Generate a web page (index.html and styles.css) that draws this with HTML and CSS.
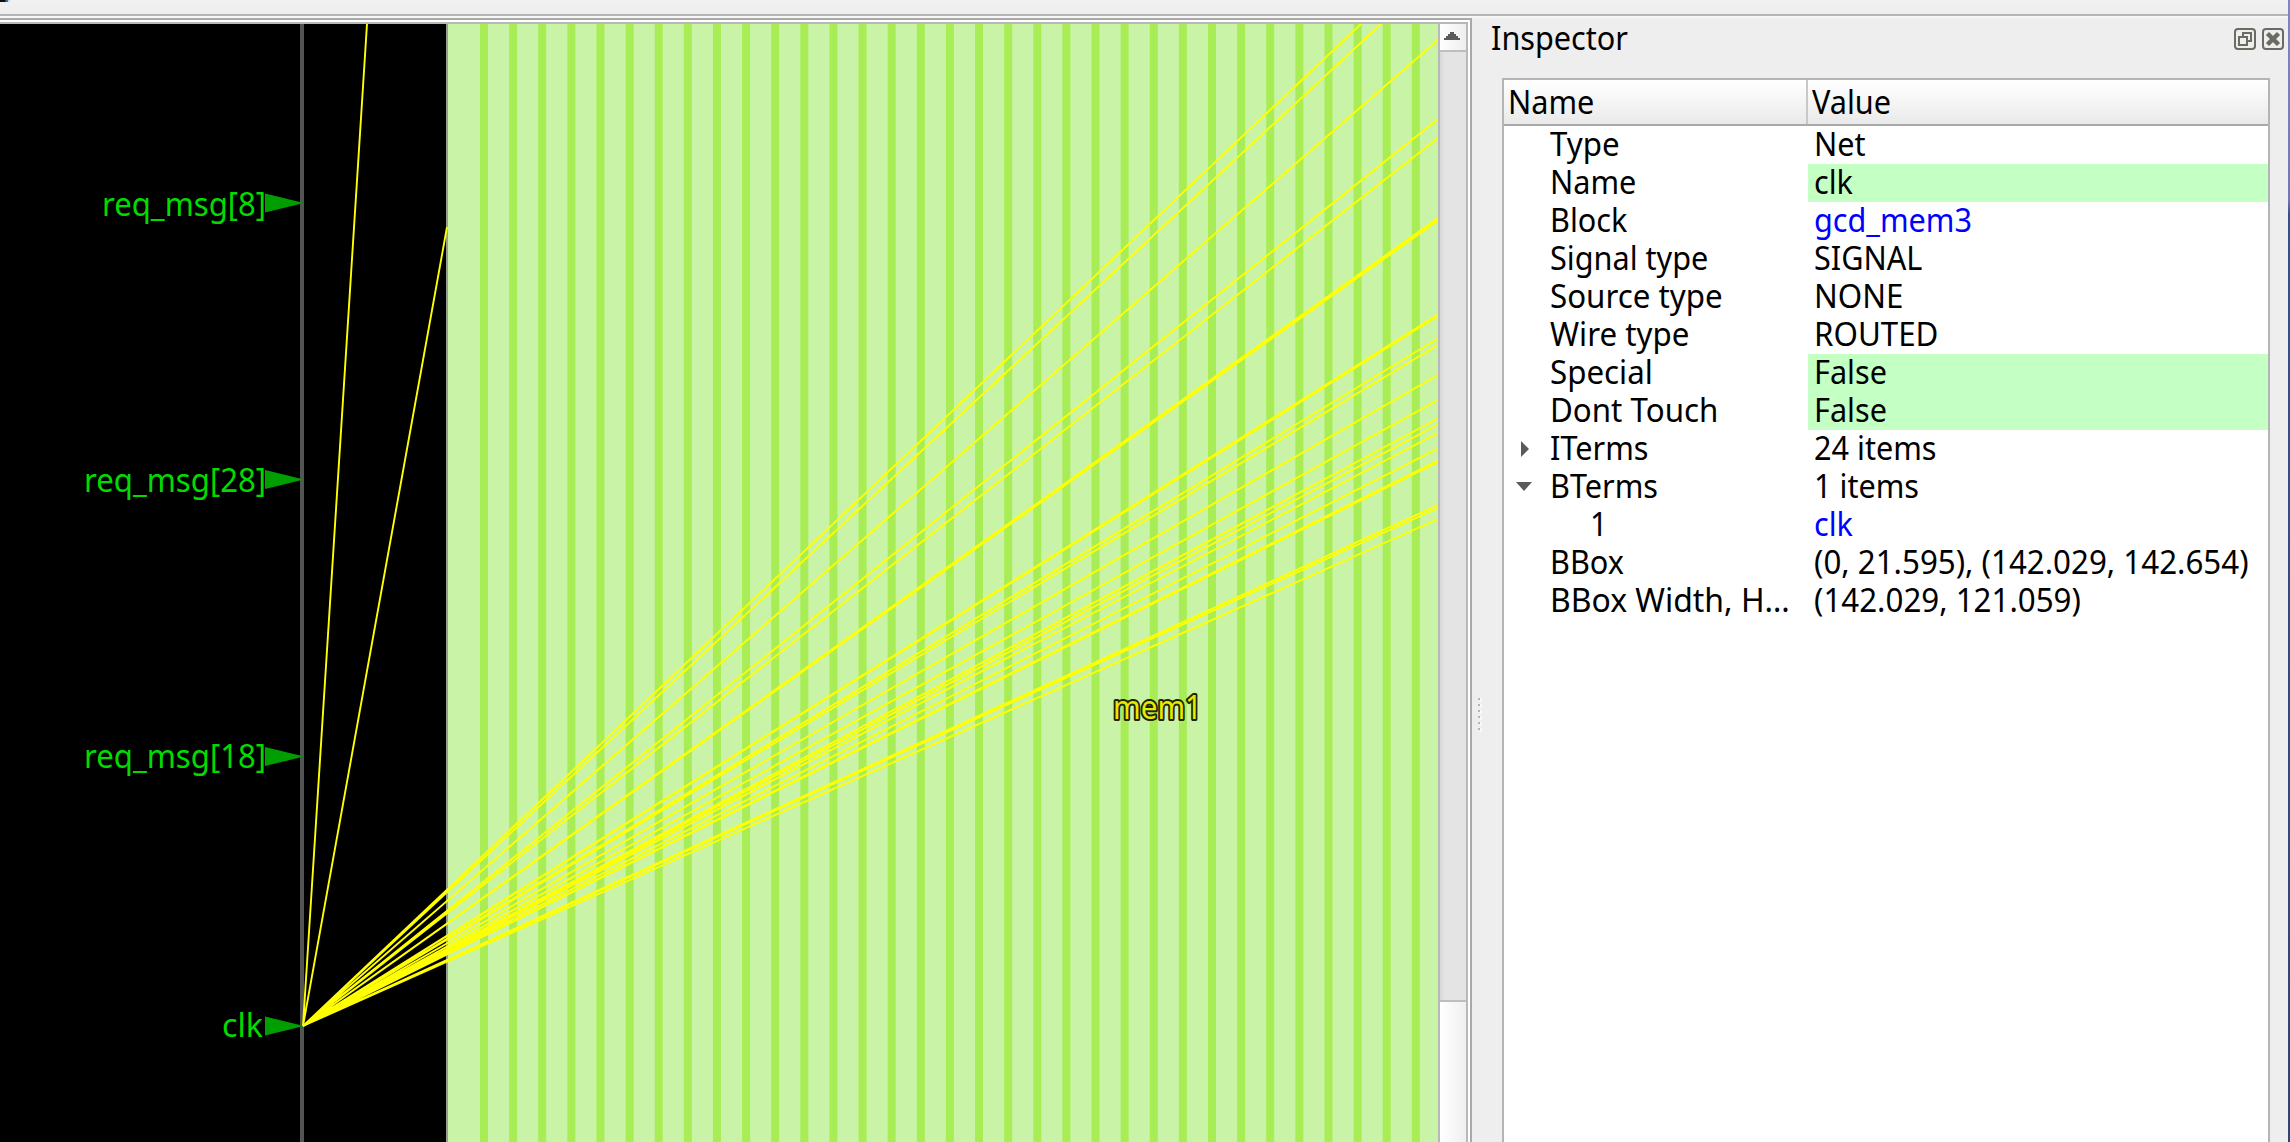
FILE: index.html
```html
<!DOCTYPE html>
<html lang="en">
<head>
<meta charset="utf-8">
<title>Layout viewer</title>
<link rel="stylesheet" href="styles.css">
</head>
<body>
<div class="window">
  <div class="toolbar"><span class="toolbar-mark"></span></div>
  <main class="workspace">
    <section class="viewer">
      <svg class="layout" width="1438" height="1118" viewBox="0 24 1438 1118">
        <rect x="0" y="24" width="1438" height="1118" fill="#000"/>
        <rect x="446" y="24" width="992" height="1118" fill="#c9f4a7"/>
        <path d="M480 583H1438" stroke="#a8ed55" stroke-width="1118" stroke-dasharray="8 21.12" stroke-dashoffset="0"/>
        <rect x="446" y="24" width="2" height="1118" fill="#96a08c"/>
        <rect x="300" y="24" width="4" height="1118" fill="#545454"/>
        <g class="pin-mark">
          <path d="M265 193.500L304 203L265 212.500Z"/>
          <path d="M265 470L304 479.500L265 489Z"/>
          <path d="M265 747L304 756.500L265 766Z"/>
          <path d="M265 1016.500L304 1026L265 1035.500Z"/>
        </g>
        <g class="pin-name">
          <text x="102" y="216" textLength="164" lengthAdjust="spacingAndGlyphs">req_msg[8]</text>
          <text x="84" y="492" textLength="182" lengthAdjust="spacingAndGlyphs">req_msg[28]</text>
          <text x="84" y="768" textLength="182" lengthAdjust="spacingAndGlyphs">req_msg[18]</text>
          <text x="222" y="1037" textLength="41" lengthAdjust="spacingAndGlyphs">clk</text>
        </g>
        <g class="flylines">
          <path d="M303 1026L367 24M303 1026L447 227"/>
          <path d="M303 1026L1361 24M303 1026L1381 24M303 1026L1438 40M303 1026L1438 119M303 1026L1438 138"/>
          <path d="M303 1026L1438 218M303 1026L1438 220.500M303 1026L1438 314.500M303 1026L1438 316M303 1026L1438 338.500M303 1026L1438 345"/>
          <path d="M303 1026L1438 375M303 1026L1438 400M303 1026L1438 418.500M303 1026L1438 424.500M303 1026L1438 433M303 1026L1438 448.500"/>
          <path d="M303 1026L1438 460.500M303 1026L1438 462M303 1026L1438 505M303 1026L1438 508M303 1026L1438 519"/>
        </g>
        <text class="macro-name" x="1113" y="719" textLength="89" lengthAdjust="spacingAndGlyphs">mem1</text>
      </svg>
      <div class="scrollbar">
        <div class="scroll-up"><svg width="16" height="8" viewBox="0 0 16 8"><path d="M6 0H10V2H12V4H14V6H16V8H0V6H2V4H4V2H6Z" fill="#5a5a5a"/></svg></div>
        <div class="scroll-track"></div>
        <div class="scroll-thumb"></div>
      </div>
    </section>
    <div class="splitter"><i></i><i></i><i></i><i></i><i></i><i></i></div>
    <aside class="inspector">
      <header class="dock-title">
        <span class="txt">Inspector</span>
        <svg class="dock-buttons" width="50" height="22" viewBox="0 0 50 22" fill="none" stroke="#6b6b63" stroke-width="2">
          <rect x="1" y="1" width="20" height="20" rx="3"/>
          <path d="M9 9V5H17V13H13M5 9H13V17H5Z"/>
          <rect x="29" y="1" width="20" height="20" rx="3"/>
          <path d="M33.500 5.500L44.500 16.500M44.500 5.500L33.500 16.500" stroke-width="4.500"/>
        </svg>
      </header>
      <div class="tree">
        <div class="row head"><div class="cell"><span class="txt">Name</span></div><div class="cell"><span class="txt">Value</span></div></div>
        <div class="row"><div class="cell"><span class="txt wide">Type</span></div><div class="cell"><span class="txt">Net</span></div></div>
        <div class="row"><div class="cell"><span class="txt">Name</span></div><div class="cell edit"><span class="txt">clk</span></div></div>
        <div class="row"><div class="cell"><span class="txt">Block</span></div><div class="cell link"><span class="txt">gcd_mem3</span></div></div>
        <div class="row"><div class="cell"><span class="txt">Signal type</span></div><div class="cell"><span class="txt">SIGNAL</span></div></div>
        <div class="row"><div class="cell"><span class="txt wide">Source type</span></div><div class="cell"><span class="txt wide">NONE</span></div></div>
        <div class="row"><div class="cell"><span class="txt wide">Wire type</span></div><div class="cell"><span class="txt wide">ROUTED</span></div></div>
        <div class="row"><div class="cell"><span class="txt wide">Special</span></div><div class="cell edit"><span class="txt">False</span></div></div>
        <div class="row"><div class="cell"><span class="txt wide">Dont Touch</span></div><div class="cell edit"><span class="txt">False</span></div></div>
        <div class="row"><div class="cell branch"><svg width="46" height="38" viewBox="0 0 46 38"><path d="M17 11L25 19L17 27Z" fill="#5a5a5a"/></svg><span class="txt">ITerms</span></div><div class="cell"><span class="txt">24 items</span></div></div>
        <div class="row"><div class="cell branch"><svg width="46" height="38" viewBox="0 0 46 38"><path d="M12 14H28L20 23Z" fill="#5a5a5a"/></svg><span class="txt">BTerms</span></div><div class="cell"><span class="txt">1 items</span></div></div>
        <div class="row"><div class="cell child"><span class="txt">1</span></div><div class="cell link"><span class="txt">clk</span></div></div>
        <div class="row"><div class="cell"><span class="txt">BBox</span></div><div class="cell"><span class="txt wide">(0, 21.595), (142.029, 142.654)</span></div></div>
        <div class="row"><div class="cell"><span class="txt full">BBox Width, H…</span></div><div class="cell"><span class="txt wide">(142.029, 121.059)</span></div></div>
      </div>
    </aside>
  </main>
</div>
</body>
</html>
```
FILE: styles.css
```css
* { box-sizing: border-box; }
body { margin: 0; font-family: "Noto Sans", sans-serif; font-size: 32px; color: #000; background: #eee; }
.window { width: 2290px; height: 1142px; overflow: hidden; display: flex; flex-direction: column; background: #eee; border-right: 2px solid; border-image: linear-gradient(#8084c0, #7378b4 200px, #34508a 215px, #33436f) 1; border-image-width: 0 2px 0 0; }
.toolbar { height: 18px; flex: none; background: linear-gradient(#f1f1f1, #eee); border-bottom: 2px solid #f7f7f7; box-shadow: inset 0 -2px #b4b4b4; }
.toolbar-mark { display: block; width: 10px; height: 2px; background: linear-gradient(90deg, #081018 5px, #3d70a8 6px 8px, #b8dcf0 8px); }
.workspace { flex: 1; min-height: 0; display: flex; }
.viewer { width: 1472px; display: flex; border-top: 2px solid #a9a9a9; border-right: 2px solid #a9a9a9; padding: 2px 2px 0 0; background: #fff; }
.layout { display: block; flex: none; width: 1438px; height: 1120px; border-top: 2px solid #b8b8b8; }
.pin-mark { fill: #009e00; }
.pin-name { fill: #00dc00; }
.flylines { fill: none; stroke: #ff0; stroke-width: 1.9; }
.macro-name { fill: #e8e800; stroke: #1c2400; stroke-width: 4px; paint-order: stroke; stroke-linejoin: round; }
.scrollbar { width: 30px; display: flex; flex-direction: column; border: solid #b8b8b8; border-width: 2px 2px 0; }
.scroll-up { height: 28px; display: flex; align-items: center; justify-content: center; padding-right: 2px; padding-bottom: 2px; background: linear-gradient(90deg, #fefefe, #eee); border-bottom: 2px solid #bebebe; }
.scroll-track { height: 948px; background: linear-gradient(90deg, #d8d8d8, #e4e4e4 5px); }
.scroll-thumb { flex: 1; border-top: 2px solid #bebebe; background: linear-gradient(90deg, #fff, #efefef); }
.splitter { width: 18px; padding: 680px 0 0 6px; display: flex; flex-direction: column; gap: 4px; }
.splitter i { width: 2px; height: 2px; flex: none; background: #b5b5b5; box-shadow: 2px 0 #f8f8f8, 2px 2px #f8f8f8; }
.inspector { flex: 1; display: flex; flex-direction: column; }
.dock-title { height: 60px; flex: none; display: flex; justify-content: space-between; align-items: flex-start; padding: 2px 4px 0 1px; }
.dock-buttons { margin-top: 8px; }
.tree { flex: 1; margin: 0 18px 0 12px; border: 2px solid #b4b4b4; border-bottom: 0; background: #fff; }
.row { display: grid; grid-template-columns: 304px 460px; height: 38px; }
.cell { display: flex; align-items: flex-start; height: 38px; padding-left: 46px; }
.cell + .cell { padding-left: 6px; }
.txt { display: block; line-height: 36px; white-space: nowrap; transform: scaleX(.957); transform-origin: 0 0; }
.wide { transform: scaleX(.978); }
.full { transform: scaleX(.997); }
.head { height: 46px; border-bottom: 2px solid #a9a9a9; background: linear-gradient(#fff, #f4f4f4 55%, #e9e9e9); }
.head .cell { height: 44px; padding-left: 4px; }
.head .cell:first-child { border-right: 2px solid #c8c8c8; }
.head .txt { margin-top: 4px; }
.row .branch { padding-left: 0; }
.branch svg { flex: none; }
.row .child { padding-left: 86px; }
.edit { background: #c4ffc4; }
.link { color: #00f; }
```
